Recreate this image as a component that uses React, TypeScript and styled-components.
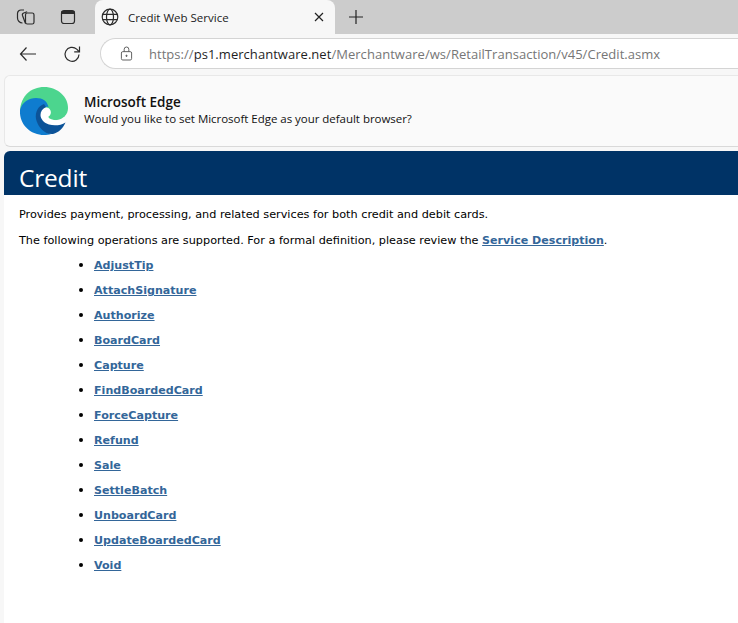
import React from 'react';
import styled, { createGlobalStyle } from 'styled-components';

const operations = [
  'AdjustTip',
  'AttachSignature',
  'Authorize',
  'BoardCard',
  'Capture',
  'FindBoardedCard',
  'ForceCapture',
  'Refund',
  'Sale',
  'SettleBatch',
  'UnboardCard',
  'UpdateBoardedCard',
  'Void',
];

function EdgeLogo() {
  return (
    <LogoSvg viewBox="0 0 48 48">
      <path d="M0 23C1 9 11 0 24 0c14 0 24 10 24 21 0 7-5 11-11 12L24 34z" fill="#4cd58e" />
      <path d="M26 19c-6 1-9 7-8 12 2 8 11 11 18 10 5-1 8-4 10-8-4 .5-8 1-12 0-4-1-6-2-5.500-3.500 2-1 3-3.500 2-6-1-2.500-3.500-3.500-6.500-2.500z" fill="#ffffff" />
      <path d="M0 23C2 15 9 11 16 11c7 0 11 3 12.500 9-4.500-1-11.500 2-11.500 10 -.5 8 6 14 14 17-2 .7-4.500 1-7 1C10 48-1 37 0 23z" fill="#0f7ccf" />
      <path d="M24 17c-6 2-9 8-8 15 2 9 10 16 17 15 6-1.500 10-6 12.500-11.500-4.500 3-11.500 3.500-16.500 2-5-1.500-8.500-5.500-8.500-9.500 0-3.500 2-6.500 5.500-8z" fill="#0c5398" />
    </LogoSvg>
  );
}

function App() {
  return (
    <>
      <GlobalStyle />
      <TabStrip>
        <StripButtons>
          <Icon viewBox="0 0 20 20">
            <rect x="9.500" y="6" width="8.500" height="11" rx="1.800" />
            <path d="M9.500 16.500 6.500 8.500a2 2 0 0 1 1.200-2.500l3.500-1.300" />
            <path d="M6.500 16A5 5 0 0 1 1.500 11V6.500A3.500 3.500 0 0 1 5 3h3" />
          </Icon>
          <Icon viewBox="0 0 20 20">
            <rect x="3.500" y="3.500" width="13" height="13" rx="2.500" />
            <path d="M3.500 5.500h13" strokeWidth="3" />
          </Icon>
        </StripButtons>
        <ActiveTab>
          <Icon viewBox="0 0 20 20">
            <circle cx="10" cy="10" r="7.800" />
            <ellipse cx="10" cy="10" rx="3.500" ry="7.800" />
            <path d="M2.800 7.300h14.400M2.800 12.700h14.400" />
          </Icon>
          <TabTitle>Credit Web Service</TabTitle>
          <CloseIcon viewBox="0 0 12 12">
            <path d="M2 2l8 8M10 2l-8 8" />
          </CloseIcon>
        </ActiveTab>
        <NewTab viewBox="0 0 16 16">
          <path d="M8 1v14M1 8h14" />
        </NewTab>
      </TabStrip>
      <Toolbar>
        <NavButtons>
          <Icon viewBox="0 0 20 20">
            <path d="M18 10H2.500M8.500 3.500 2.500 10l6 6.500" />
          </Icon>
          <Icon viewBox="0 0 20 20">
            <path d="M17 10.500a7 7 0 1 1-2.300-5.400L17 7.500" />
            <path d="M17.500 2.500v5.300h-5.300" />
          </Icon>
        </NavButtons>
        <AddressBar>
          <LockIcon viewBox="0 0 14 16">
            <rect x="1.500" y="6" width="11" height="9" rx="1.500" />
            <path d="M4.500 6V3.500a2.500 2.500 0 0 1 5 0V6" />
            <circle cx="7" cy="10.500" r=".7" fill="#555" />
          </LockIcon>
          <Url>
            https://<strong>ps1.merchantware.net</strong>/Merchantware/ws/RetailTransaction/v45/Credit.asmx
          </Url>
        </AddressBar>
      </Toolbar>
      <Main>
        <Banner>
          <EdgeLogo />
          <BannerText>
            <BannerTitle>Microsoft Edge</BannerTitle>
            <BannerQuestion>Would you like to set Microsoft Edge as your default browser?</BannerQuestion>
          </BannerText>
        </Banner>
        <Page>
          <Heading>Credit</Heading>
          <Intro>Provides payment, processing, and related services for both credit and debit cards.</Intro>
          <Intro>
            The following operations are supported. For a formal definition, please review the{' '}
            <PageLink href="#">Service Description</PageLink>.
          </Intro>
          <OperationList>
            {operations.map((name) => (
              <Operation key={name}>
                <PageLink href="#">{name}</PageLink>
              </Operation>
            ))}
          </OperationList>
        </Page>
      </Main>
    </>
  );
}

const GlobalStyle = createGlobalStyle`
  html, body {
    margin: 0;
    height: 100%;
    overflow: hidden;
    background-color: #f7f7f7;
  }
`;

const LogoSvg = styled.svg`
  width: 48px;
  height: 48px;
  flex: none;
`;

const Icon = styled.svg`
  width: 20px;
  height: 20px;
  flex: none;
  fill: none;
  stroke: #2b2b2b;
  stroke-width: 1.2;
`;

const TabStrip = styled.div`
  display: flex;
  align-items: flex-end;
  height: 34px;
  padding-left: 16px;
  background-color: #cccccc;
`;

const StripButtons = styled.div`
  display: flex;
  align-items: center;
  gap: 22px;
  height: 34px;
  padding-right: 17px;
`;

const ActiveTab = styled.div`
  display: flex;
  align-items: center;
  width: 240px;
  height: 34px;
  padding: 0 10px 0 5px;
  box-sizing: border-box;
  background-color: #f7f7f7;
  border-radius: 8px 8px 0 0;
`;

const TabTitle = styled.span`
  flex: 1;
  margin-left: 8px;
  color: #222;
  font-family: 'Open Sans', sans-serif;
  font-size: 11.500px;
`;

const CloseIcon = styled.svg`
  width: 12px;
  height: 12px;
  fill: none;
  stroke: #222;
  stroke-width: 1.2;
`;

const NewTab = styled.svg`
  width: 16px;
  height: 16px;
  margin: 0 0 9px 13px;
  fill: none;
  stroke: #222;
  stroke-width: 1.2;
`;

const Toolbar = styled.div`
  display: flex;
  align-items: flex-start;
  height: 41px;
  padding: 4px 0 0 18px;
  box-sizing: border-box;
  background-color: #f7f7f7;
`;

const NavButtons = styled.div`
  display: flex;
  align-items: center;
  gap: 24px;
  height: 31px;
  padding-right: 18px;
`;

const AddressBar = styled.div`
  display: flex;
  align-items: center;
  flex: 1;
  height: 31px;
  padding-left: 19px;
  box-sizing: border-box;
  background-color: #fff;
  border: 1px solid #d4d4d4;
  border-right: none;
  border-radius: 16px 0 0 16px;
`;

const LockIcon = styled.svg`
  width: 13px;
  height: 15px;
  fill: none;
  stroke: #555;
  stroke-width: 1;
`;

const Url = styled.span`
  margin-left: 16px;
  color: #767676;
  font-family: 'Open Sans', sans-serif;
  font-size: 13px;
  letter-spacing: 0.04px;
  white-space: nowrap;

  strong {
    color: #1f1f1f;
    font-weight: 400;
  }
`;

const Main = styled.div`
  padding-left: 4px;
`;

const Banner = styled.div`
  display: flex;
  align-items: center;
  height: 72px;
  padding-left: 15px;
  background-color: #fafafa;
  border: 1px solid #e8e8e8;
  border-bottom-color: #d9d9d9;
  border-right: none;
  border-radius: 6px 0 0 6px;
  box-sizing: border-box;
`;

const BannerText = styled.div`
  margin: 0 0 2px 16px;
  color: #111;
  font-family: 'Open Sans', sans-serif;
`;

const BannerTitle = styled.div`
  font-size: 13.500px;
  font-weight: 600;
  line-height: 17px;
`;

const BannerQuestion = styled.div`
  font-size: 11.500px;
  letter-spacing: -0.03px;
  line-height: 16px;
`;

const Page = styled.div`
  height: 472px;
  margin-top: 4px;
  background-color: #fff;
  border-radius: 6px 0 0 0;
  overflow: hidden;
`;

const Heading = styled.h1`
  height: 44px;
  margin: 0;
  padding: 10px 0 0 15px;
  box-sizing: border-box;
  color: #fff;
  background-color: #003366;
  font-family: 'Open Sans', sans-serif;
  font-size: 24.500px;
  font-weight: 400;
  letter-spacing: -0.2px;
  line-height: 34px;
`;

const Intro = styled.p`
  margin: 14px 0 0 15px;
  color: #000;
  font-family: 'DejaVu Sans', Verdana, sans-serif;
  font-size: 11.250px;
  line-height: 12px;
`;

const OperationList = styled.ul`
  margin: 12px 0 0;
  padding: 0 0 0 90px;
`;

const Operation = styled.li`
  margin-bottom: 12px;
  font-family: 'DejaVu Sans', Verdana, sans-serif;
  font-size: 11px;
  line-height: 12px;

  &::marker {
    font-size: 13px;
  }
`;

const PageLink = styled.a`
  color: #336699;
  font-size: 11.100px;
  font-weight: 700;
`;

export default App;
